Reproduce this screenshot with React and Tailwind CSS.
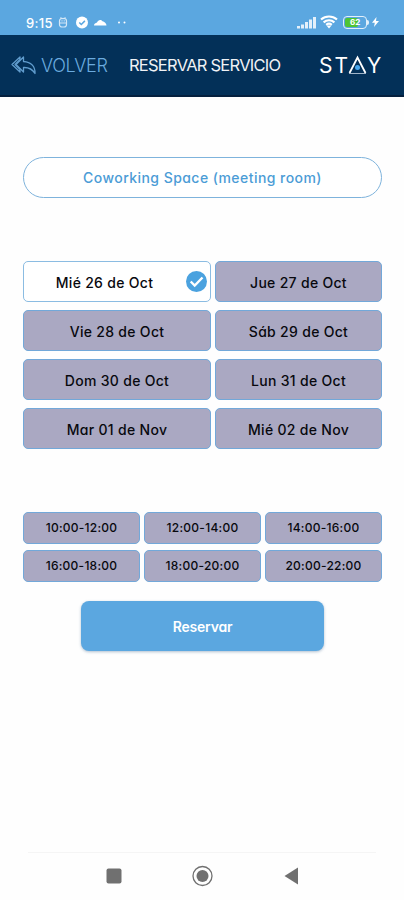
const days = [
  { label: 'Mié 26 de Oct', selected: true },
  { label: 'Jue 27 de Oct' },
  { label: 'Vie 28 de Oct' },
  { label: 'Sáb 29 de Oct' },
  { label: 'Dom 30 de Oct' },
  { label: 'Lun 31 de Oct' },
  { label: 'Mar 01 de Nov' },
  { label: 'Mié 02 de Nov' },
];

const slots = [
  '10:00-12:00',
  '12:00-14:00',
  '14:00-16:00',
  '16:00-18:00',
  '18:00-20:00',
  '20:00-22:00',
];

const StatusBar = () => (
  <div className="flex h-[35px] items-start justify-between bg-[#5ba7e0] pl-[26px] pr-[25px] pt-4 text-white">
    <div className="flex h-[14px] items-center">
      <span className="w-[32px] text-[13px] font-medium leading-[14px] tracking-[0.3px]">9:15</span>
      <svg width="70" height="14" viewBox="0 0 70 14" fill="none">
        <g stroke="#d5e8f7" strokeWidth="1.2">
          <path d="M2.500 1.500c.5 1.500 4.500 1.500 5 0M1.500 7h7M3.500 4.800h1M5.700 4.800h1" />
          <rect x="1.500" y="2.500" width="7" height="8.500" rx="2.500" />
        </g>
        <circle cx="24" cy="6.500" r="6" fill="#fff" />
        <path d="M21.300 6.500l2 2 3.600-3.600" stroke="#5ba7e0" strokeWidth="1.500" />
        <path d="M36 9.500c0-1.800 1.700-2.600 3-3 1-2.800 4-3.600 5.500-1.200 1.800.3 4 2 4 4.200z" fill="#fff" />
        <circle cx="61" cy="6.500" r="1" fill="#fff" />
        <circle cx="66.500" cy="6.500" r="1" fill="#fff" />
      </svg>
    </div>
    <div className="-mt-px flex h-[14px] items-center">
      <svg width="19" height="13" viewBox="0 0 19 13" fill="#e4f0fa">
        <rect x="0" y="10" width="3" height="2.500" />
        <rect x="4" y="8.500" width="3" height="4" />
        <rect x="8" y="6" width="3" height="6.500" />
        <rect x="12" y="3.500" width="3" height="9" />
        <rect x="16" y="1" width="3" height="11.500" />
      </svg>
      <svg className="ml-[4px]" width="18" height="14" viewBox="0 0 18 14" fill="none" stroke="#fff" strokeWidth="2.200">
        <path d="M1 4.500c4.700-4 11.300-4 16 0M3.600 7.300c3.200-2.700 7.600-2.700 10.800 0M6.200 9.800c1.700-1.400 3.900-1.400 5.600 0" />
        <path d="M6.500 10.500L9 13.500l2.500-3z" fill="#fff" stroke="none" />
      </svg>
      <div className="ml-[5px] flex h-[13px] w-[24px] rounded-[4px] border-[1.5px] border-[#e2f0fb] p-px">
        <div className="flex w-[13px] items-center rounded-[2px] bg-[#4fc433] pl-[5px] text-[8px] font-bold leading-none">
          62
        </div>
      </div>
      <div className="h-[5px] w-[2px] rounded-r-sm bg-[#e2f0fb]" />
      <svg className="ml-[3px]" width="7" height="10" viewBox="0 0 7 10" fill="#fff">
        <path d="M4.500 0L0 5.800h2.800L2 10l5-6H4z" />
      </svg>
    </div>
  </div>
);

const Header = () => (
  <header className="flex h-[62px] items-center border-b-2 border-[#05203e] bg-[#033058] pl-[11px]">
    <svg width="26" height="19" viewBox="0 0 26 19" fill="none" stroke="#619dce" strokeWidth="1.300" strokeLinejoin="round">
      <path d="M9 1L1 8.500 9 16v-2.500L4 8.500 9 3.500z" />
      <path d="M12.500 1L5 8.500l7.500 7.500v-4.500c4.500-.2 8.500 1 11.500 6 .3-7-4-11.500-11.500-12z" />
    </svg>
    <span className="ml-[4px] w-[88px] whitespace-nowrap pt-px text-[18px] font-light tracking-[-0.3px] text-[#6babdf]">
      VOLVER
    </span>
    <h1 className="w-[190px] whitespace-nowrap pt-px text-[16.5px] font-normal tracking-[-0.75px] text-[#f0f2f5]">
      RESERVAR SERVICIO
    </h1>
    {/* Brand wordmark, the A closes into a triangle */}
    <svg width="64" height="24" viewBox="0 0 64 24" fill="#fff" aria-label="STAY">
      <g fontFamily="Inter, sans-serif" fontSize="21">
        <text x="0" y="19.500">S</text>
        <text x="15.500" y="19.500">T</text>
        <text x="48" y="19.500">Y</text>
      </g>
      <path d="M30.500 20L38.500 4.500 46.500 20" fill="none" stroke="#fff" strokeWidth="1.800" />
      <path d="M30 20.500h17" stroke="#9fb3c8" strokeWidth="1" />
      <circle cx="38.500" cy="14.500" r="2.500" fill="#49a8ef" />
    </svg>
  </header>
);

const DayButton = ({ label, selected }) => (
  <button
    className={`relative h-[41px] rounded-[5px] border pt-px text-[14px] font-medium tracking-[0.3px] text-[#08080e] ${
      selected ? 'border-[#8bbce2] bg-white pr-[25px]' : 'border-[#72a8d9] bg-[#aaa8c2]'
    }`}
  >
    {label}
    {selected && (
      <svg className="absolute right-[3px] top-[9px]" width="21" height="21" viewBox="0 0 21 21">
        <circle cx="10.500" cy="10.500" r="10.500" fill="#4ba2df" />
        <path d="M4.700 10.500l4 4 7.800-8" fill="none" stroke="#fff" strokeWidth="2.400" />
      </svg>
    )}
  </button>
);

const NavBar = () => (
  <footer className="mx-[28px] mt-[201px] flex h-[48px] justify-center border-t border-[#f5f5f5] pt-[12px]">
    <svg width="194" height="22" viewBox="0 0 194 22" fill="#707070">
      <rect x="1.500" y="3.500" width="15" height="15" rx="2" />
      <circle cx="97.500" cy="11" r="6" />
      <circle cx="97.500" cy="11" r="9.500" fill="none" stroke="#707070" strokeWidth="1.300" />
      <path d="M193 2.500v17L179.500 11z" />
    </svg>
  </footer>
);

const App = () => {
  return (
    <div className="h-[900px] w-[404px] overflow-hidden bg-[#fefefe] font-['Inter',sans-serif] [font-feature-settings:'cv11']">
      <StatusBar />
      <Header />
      <main className="pl-[23px] pr-[22px] pt-[60px]">
        <div className="flex h-[41px] items-center justify-center rounded-full border border-[#7eb3dc] bg-white text-[14px] font-medium tracking-[0.45px] text-[#4b9cd6]">
          Coworking Space (meeting room)
        </div>

        <div className="mt-[63px] grid grid-cols-[188px_167px] gap-x-1 gap-y-2">
          {days.map((day) => (
            <DayButton key={day.label} {...day} />
          ))}
        </div>

        <div className="mt-[63px] grid grid-cols-3 gap-x-1 gap-y-[6px]">
          {slots.map((slot) => (
            <button
              key={slot}
              className="h-8 rounded-[5px] border border-[#72a8d9] bg-[#aaa8c2] pb-px text-[12px] font-medium tracking-[0.25px] text-[#08080e]"
            >
              {slot}
            </button>
          ))}
        </div>

        <button className="mx-auto mt-[19px] flex h-[50px] w-[243px] items-center justify-center rounded-[8px] bg-[#5ba7e0] text-[14px] font-semibold tracking-[-0.2px] text-white shadow-[0_1px_3px_rgba(60,100,140,0.4)]">
          Reservar
        </button>
      </main>
      <NavBar />
    </div>
  );
};

export default App;
